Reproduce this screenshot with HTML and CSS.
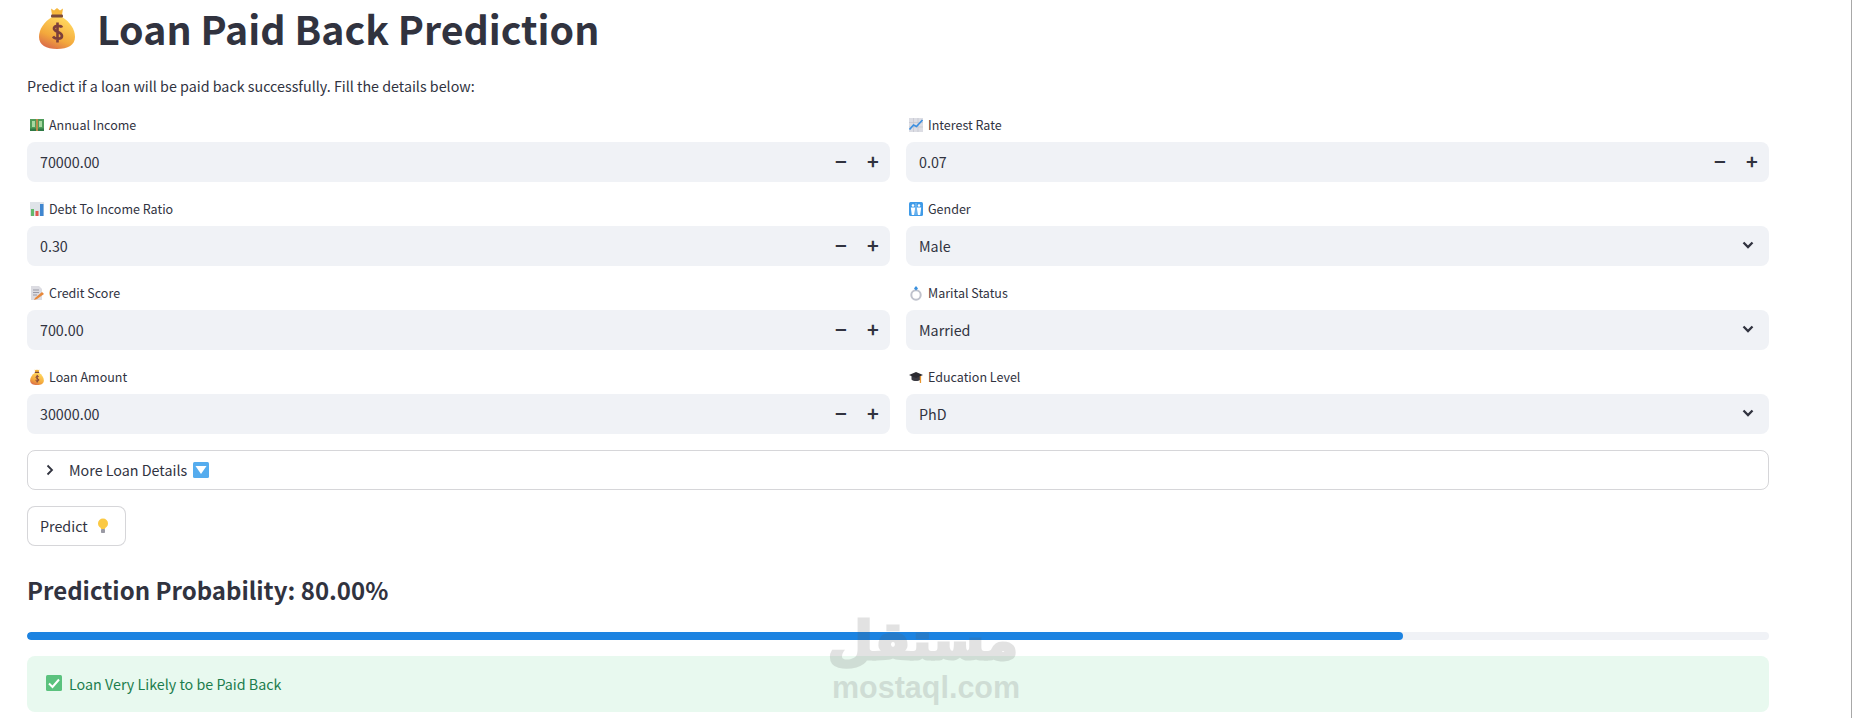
FILE: index.html
```html
<!DOCTYPE html>
<html lang="en">
<head>
  <meta charset="UTF-8">
  <meta name="viewport" content="width=device-width, initial-scale=1.0">
  <title>Loan Paid Back Prediction</title>
  <link rel="stylesheet" href="styles.css">
</head>
<body>

<!-- Emoji drawings, used through <use> below -->
<svg class="defs" width="0" height="0">
  <defs>
    <linearGradient id="bagFill" x1="0.7" y1="0.1" x2="0.25" y2="1">
      <stop offset="0" stop-color="#ffd45c"/>
      <stop offset="0.6" stop-color="#f3a83c"/>
      <stop offset="1" stop-color="#d9694a"/>
    </linearGradient>
    <symbol id="i-bag" viewBox="0 0 36 42">
      <path d="M12 1.500 15 3.500 18 1 21 3.500 24 1.500 23 8H13Z" fill="#f6b73c"/>
      <path d="M13 10C5 15 0 22 0 30c0 8 7 12 18 12s18-4 18-12c0-8-5-15-13-20Z" fill="url(#bagFill)"/>
      <rect x="12" y="7.500" width="12" height="3" rx="1" fill="#7b4a3a"/>
      <path d="M23 20.500c-1-2-7-2.500-8 .5-1 4 8 3.500 8 8 0 3.500-7 3.500-9 .5M18.500 15.500v20" fill="none" stroke="#7d3f3a" stroke-width="2.600"/>
    </symbol>
    <symbol id="i-cash" viewBox="0 0 16 16">
      <rect x="1" y="2" width="14" height="12" fill="#4f9c5a"/>
      <rect x="1" y="11.500" width="14" height="2.500" fill="#2f7a45"/>
      <rect x="3" y="4" width="3" height="6" fill="#a6d8a0"/>
      <rect x="10" y="4" width="3" height="6" fill="#a6d8a0"/>
      <rect x="7" y="2" width="2" height="12" fill="#b98a4a"/>
    </symbol>
    <symbol id="i-bars" viewBox="0 0 16 16">
      <rect x="1" y="1" width="14" height="14" fill="#dfe3e8"/>
      <rect x="2" y="8" width="3" height="7" fill="#63b96c"/>
      <rect x="6.500" y="10" width="3" height="5" fill="#e0584f"/>
      <rect x="11" y="3" width="3.500" height="12" fill="#3f86d0"/>
    </symbol>
    <symbol id="i-memo" viewBox="0 0 16 16">
      <path d="M2 1h8l3 3v11H2Z" fill="#dcdce2"/>
      <path d="M4 5h6M4 7.500h6M4 10h4" stroke="#9a9aa6" stroke-width="1"/>
      <path d="M6 13 13 7l2 2-7 5-3 1Z" fill="#e8883a"/>
    </symbol>
    <symbol id="i-up" viewBox="0 0 16 16">
      <rect x="1" y="1" width="14" height="14" fill="#dcdde4"/>
      <path d="M1 5.500h14M1 10h14M5.500 1v14M10 1v14" stroke="#c3c4cf" stroke-width="0.700"/>
      <path d="M1.500 12.500 5.500 8l3 1.500L14.500 3" fill="none" stroke="#3b8fe0" stroke-width="1.700"/>
    </symbol>
    <symbol id="i-wc" viewBox="0 0 16 16">
      <rect x="1" y="1" width="14" height="14" rx="1.500" fill="#3f9be8"/>
      <circle cx="5" cy="4.500" r="1.300" fill="#fff"/>
      <circle cx="11" cy="4.500" r="1.300" fill="#fff"/>
      <path d="M2.800 6.500h4.400L6.200 14H3.800ZM8.800 6.500h4.400L12.200 14H9.800Z" fill="#fff"/>
      <rect x="7.700" y="2" width="0.600" height="12" fill="#bfe0fa"/>
    </symbol>
    <symbol id="i-ring" viewBox="0 0 16 16">
      <circle cx="8" cy="10" r="4.700" fill="none" stroke="#bfc2cc" stroke-width="2"/>
      <path d="M6 3.500 8 1l2 2.500L8 5.500Z" fill="#3a90de"/>
    </symbol>
    <symbol id="i-cap" viewBox="0 0 16 16">
      <path d="M3.500 7v3.500c2 2 7 2 9 0V7Z" fill="#3a3a42"/>
      <path d="M1 6 8 3l7 3-7 3Z" fill="#2a2a30"/>
      <rect x="11.800" y="7" width="1.300" height="7" fill="#e8962e"/>
    </symbol>
    <symbol id="i-down" viewBox="0 0 16 16">
      <rect x="0" y="0" width="16" height="16" rx="1.500" fill="#55acee"/>
      <path d="M2.500 4h11L8 12Z" fill="#fff"/>
    </symbol>
    <symbol id="i-bulb" viewBox="0 0 16 16">
      <circle cx="8" cy="5.500" r="5" fill="#fbc944"/>
      <path d="M5.500 8.500h5L10 11H6Z" fill="#fbc944"/>
      <rect x="6" y="11" width="4" height="4" rx="0.800" fill="#9a9aa4"/>
    </symbol>
    <symbol id="i-check" viewBox="0 0 16 16">
      <rect x="0" y="0" width="16" height="16" rx="1.500" fill="#5bc27e"/>
      <path d="M3 8.500 6.500 12 13 4.500" fill="none" stroke="#fff" stroke-width="2"/>
    </symbol>
  </defs>
</svg>

<div class="page">

  <h1 class="title">
    <svg class="title-icon"><use href="#i-bag"/></svg>
    Loan Paid Back Prediction
  </h1>

  <p class="intro">Predict if a loan will be paid back successfully. Fill the details below:</p>

  <!-- Form fields -->
  <div class="fields">
    <div class="field">
      <label class="label"><svg class="emoji"><use href="#i-cash"/></svg>Annual Income</label>
      <div class="input">
        <span class="value">70000.00</span>
        <span class="step">−</span><span class="step">+</span>
      </div>
    </div>
    <div class="field">
      <label class="label"><svg class="emoji"><use href="#i-up"/></svg>Interest Rate</label>
      <div class="input">
        <span class="value">0.07</span>
        <span class="step">−</span><span class="step">+</span>
      </div>
    </div>
    <div class="field">
      <label class="label"><svg class="emoji"><use href="#i-bars"/></svg>Debt To Income Ratio</label>
      <div class="input">
        <span class="value">0.30</span>
        <span class="step">−</span><span class="step">+</span>
      </div>
    </div>
    <div class="field">
      <label class="label"><svg class="emoji"><use href="#i-wc"/></svg>Gender</label>
      <div class="input">
        <span class="value">Male</span>
        <svg class="caret" viewBox="0 0 12 8"><path d="M1.500 1.500 6 6l4.500-4.500" fill="none" stroke="#31333f" stroke-width="2.300"/></svg>
      </div>
    </div>
    <div class="field">
      <label class="label"><svg class="emoji"><use href="#i-memo"/></svg>Credit Score</label>
      <div class="input">
        <span class="value">700.00</span>
        <span class="step">−</span><span class="step">+</span>
      </div>
    </div>
    <div class="field">
      <label class="label"><svg class="emoji"><use href="#i-ring"/></svg>Marital Status</label>
      <div class="input">
        <span class="value">Married</span>
        <svg class="caret" viewBox="0 0 12 8"><path d="M1.500 1.500 6 6l4.500-4.500" fill="none" stroke="#31333f" stroke-width="2.300"/></svg>
      </div>
    </div>
    <div class="field">
      <label class="label"><svg class="emoji"><use href="#i-bag"/></svg>Loan Amount</label>
      <div class="input">
        <span class="value">30000.00</span>
        <span class="step">−</span><span class="step">+</span>
      </div>
    </div>
    <div class="field">
      <label class="label"><svg class="emoji"><use href="#i-cap"/></svg>Education Level</label>
      <div class="input">
        <span class="value">PhD</span>
        <svg class="caret" viewBox="0 0 12 8"><path d="M1.500 1.500 6 6l4.500-4.500" fill="none" stroke="#31333f" stroke-width="2.300"/></svg>
      </div>
    </div>
  </div>

  <div class="expander">
    <svg class="chevron" viewBox="0 0 8 12"><path d="M1.500 1.500 6 6l-4.500 4.500" fill="none" stroke="#31333f" stroke-width="1.800"/></svg>
    <span>More Loan Details</span>
    <svg class="emoji-big"><use href="#i-down"/></svg>
  </div>

  <button class="predict">Predict <svg class="emoji-btn"><use href="#i-bulb"/></svg></button>

  <h2 class="result">Prediction Probability: 80.00%</h2>

  <div class="progress"><div class="progress-bar" style="width: 79%"></div></div>

  <div class="alert">
    <svg class="emoji-big"><use href="#i-check"/></svg>
    <span>Loan Very Likely to be Paid Back</span>
  </div>

</div>

<!-- Site watermark -->
<div class="watermark">
  <div class="wm-ar" lang="ar" dir="rtl">مستقل</div>
  <div class="wm-en">mostaql.com</div>
</div>

</body>
</html>
```

FILE: styles.css
```css
* {
  box-sizing: border-box;
}
html, body {
  height: 100%;
}
body {
  margin: 0;
  background-color: #fff;
  color: #31333f;
  font-family: "Noto Sans CJK JP", "Noto Sans", sans-serif;
  overflow: hidden;
  border-right: 1px solid #a8a8a8;
}
.defs {
  position: absolute;
}
.page {
  width: 1796px;
  padding-left: 27px;
  padding-right: 27px;
}

.title {
  display: flex;
  align-items: center;
  gap: 22px;
  margin: 0;
  padding-left: 12px;
  height: 56px;
  font-size: 39.300px;
  line-height: 56px;
  font-weight: 700;
}
.title-icon {
  width: 36px;
  height: 42px;
  flex: none;
}
.intro {
  margin: 18px 0 0;
  font-size: 14.300px;
  line-height: 24px;
}

.fields {
  display: grid;
  grid-template-columns: 1fr 1fr;
  column-gap: 16px;
  row-gap: 16px;
  margin-top: 16px;
}
.label {
  display: flex;
  align-items: center;
  height: 28px;
  padding-bottom: 7px;
  padding-left: 2px;
  font-size: 12.500px;
}
.emoji {
  width: 16px;
  height: 16px;
  margin-right: 4px;
  flex: none;
}
.input {
  display: flex;
  align-items: center;
  height: 40px;
  padding-left: 13px;
  padding-bottom: 2px;
  background-color: #f0f2f6;
  border-radius: 8px;
  font-size: 14.300px;
}
.value {
  flex: 1;
}
.step {
  width: 32px;
  text-align: center;
  font-size: 20px;
  line-height: 38px;
  font-weight: 700;
}
.step:last-child {
  margin-right: 1px;
}
.caret {
  width: 12px;
  height: 8px;
  margin-right: 15px;
}

.expander {
  display: flex;
  align-items: center;
  height: 40px;
  margin-top: 16px;
  padding-left: 18px;
  padding-bottom: 1px;
  border: 1px solid rgba(49, 51, 63, 0.2);
  border-radius: 8px;
  font-size: 14.300px;
}
.chevron {
  width: 8px;
  height: 12px;
  margin-right: 15px;
}
.emoji-big {
  width: 16px;
  height: 16px;
  margin-left: 6px;
}
.predict {
  display: flex;
  align-items: center;
  height: 40px;
  width: 99px;
  margin-top: 16px;
  padding: 0 0 1px 12px;
  background-color: #fff;
  color: #31333f;
  border: 1px solid rgba(49, 51, 63, 0.2);
  border-radius: 8px;
  font-family: inherit;
  font-size: 14.300px;
}
.emoji-btn {
  width: 16px;
  height: 16px;
  margin-left: 7px;
}

.result {
  margin: 24px 0 0;
  font-size: 24px;
  line-height: 40px;
  font-weight: 600;
}
.progress {
  height: 8px;
  margin-top: 22px;
  background-color: #f0f2f6;
  border-radius: 8px;
  overflow: hidden;
}
.progress-bar {
  height: 100%;
  background-color: #1c83e1;
  border-radius: 8px;
}
.alert {
  display: flex;
  align-items: center;
  height: 56px;
  margin-top: 16px;
  padding-left: 19px;
  padding-bottom: 2px;
  background-color: #e8f9ef;
  border-radius: 8px;
  color: #1c7d4d;
  font-size: 14.300px;
}
.alert .emoji-big {
  margin-left: 0;
  margin-right: 7px;
}

.watermark {
  position: absolute;
  left: 832px;
  top: 610px;
  width: 186px;
  text-align: center;
  color: #5a5a5a;
  opacity: 0.17;
  pointer-events: none;
}
.wm-ar {
  height: 60px;
  font-family: "DejaVu Sans", sans-serif;
  font-size: 52px;
  line-height: 62px;
  font-weight: 700;
  -webkit-text-stroke: 3px #5a5a5a;
}
.wm-en {
  font-family: "Liberation Sans", sans-serif;
  font-size: 30.500px;
  line-height: 34px;
  font-weight: 700;
}
```
